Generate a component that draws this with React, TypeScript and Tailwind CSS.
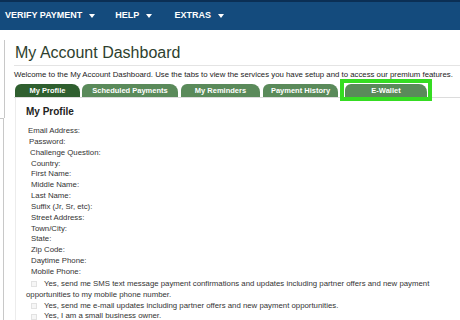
import React from "react";

const Caret = () => (
  <svg width="6" height="4" viewBox="0 0 6 4" className="ml-[7px]">
    <path d="M0 0 L6 0 L3 4 Z" fill="#ffffff" />
  </svg>
);

const labels: { t: string; ml: number }[] = [
  { t: "Email Address:", ml: 12 },
  { t: "Password:", ml: 13 },
  { t: "Challenge Question:", ml: 14 },
  { t: "Country:", ml: 15 },
  { t: "First Name:", ml: 15 },
  { t: "Middle Name:", ml: 15 },
  { t: "Last Name:", ml: 15 },
  { t: "Suffix (Jr, Sr, etc):", ml: 15 },
  { t: "Street Address:", ml: 15 },
  { t: "Town/City:", ml: 15 },
  { t: "State:", ml: 15 },
  { t: "Zip Code:", ml: 15 },
  { t: "Daytime Phone:", ml: 15 },
  { t: "Mobile Phone:", ml: 15 },
];

const Box = () => (
  <span className="inline-block w-[6px] h-[6px] border border-[#e2e2e2] bg-[#f6f6f6] mr-[7px] align-middle" />
);

export default function App() {
  return (
    <div className="w-[460px] h-[320px] overflow-hidden bg-white text-[#333] font-['Liberation_Sans',Arial,sans-serif]">
      <nav className="h-[30px] bg-[#144b7d] border-t-2 border-[#0b2f55] flex items-center text-white font-bold text-[9px]">
        <div className="flex items-center ml-[5px]">
          <span>VERIFY PAYMENT</span>
          <Caret />
        </div>
        <div className="flex items-center ml-[20px]">
          <span>HELP</span>
          <Caret />
        </div>
        <div className="flex items-center ml-[22px]">
          <span>EXTRAS</span>
          <Caret />
        </div>
      </nav>
      <div className="flex">
        <div className="w-[14px] flex flex-col">
          <div className="mt-[10px] h-[78px] w-[5px] border-r border-[#c8c8c8]" />
          <div className="h-[210px] w-[4px] border-r border-t border-[#c8c8c8]" />
        </div>
        <div className="flex-1">
          <div className="pt-[13px] pb-[2px] border-b border-[#e4e4e4]">
            <h1 className="text-[16px] leading-[20px] text-[#2e3f2e] ml-[1px]">My Account Dashboard</h1>
          </div>
          <p className="mt-[4px] text-[7.8px] leading-[10px] text-[#222] whitespace-nowrap">
            Welcome to the My Account Dashboard. Use the tabs to view the services you have setup and to access our premium features.
          </p>
          <div className="mt-[4px] flex items-end border-b border-[#dcdcdc] text-white font-bold text-[7.5px] leading-[13px]">
            <div className="ml-[1px] w-[65px] h-[13px] bg-[#2f5f2f] rounded-tl-[6px] rounded-tr-[8px] text-center">My Profile</div>
            <div className="ml-[2px] w-[96px] h-[13px] bg-[#5a8a5a] rounded-tl-[6px] rounded-tr-[8px] text-center">Scheduled Payments</div>
            <div className="ml-[3px] w-[79px] h-[13px] bg-[#5a8a5a] rounded-tl-[6px] rounded-tr-[8px] text-center">My Reminders</div>
            <div className="ml-[3px] w-[75px] h-[13px] bg-[#5a8a5a] rounded-tl-[6px] rounded-tr-[8px] text-center">Payment History</div>
            <div className="ml-[2px] -mt-[5px] -mb-[4px] -mr-[5px] border-[4px] border-[#35dc22] pt-[1px] pb-0 px-[1px] relative z-10">
              <div className="w-[82px] h-[13px] bg-[#5a8a5a] rounded-tl-[6px] rounded-tr-[8px] text-center">E-Wallet</div>
            </div>
          </div>
          <div className="ml-[1px] border-l border-[#ececec] pl-[10px] pt-[8px]">
            <div className="text-[10px] leading-[12px] font-bold text-[#222]">My Profile</div>
            <div className="mt-[8px] text-[7.8px] leading-[10.85px] text-[#333] -ml-[10px]">
              {labels.map((l) => (
                <div key={l.t} style={{ marginLeft: l.ml }}>{l.t}</div>
              ))}
              <div className="mt-[1px] ml-[15px] whitespace-nowrap flex items-center"><Box />Yes, send me SMS text message payment confirmations and updates including partner offers and new payment</div>
              <div className="ml-[10px]">opportunities to my mobile phone number.</div>
              <div className="ml-[15px] whitespace-nowrap flex items-center"><Box />Yes, send me e-mail updates including partner offers and new payment opportunities.</div>
              <div className="ml-[15px] whitespace-nowrap flex items-center"><Box />Yes, I am a small business owner.</div>
            </div>
          </div>
        </div>
      </div>
    </div>
  );
}
